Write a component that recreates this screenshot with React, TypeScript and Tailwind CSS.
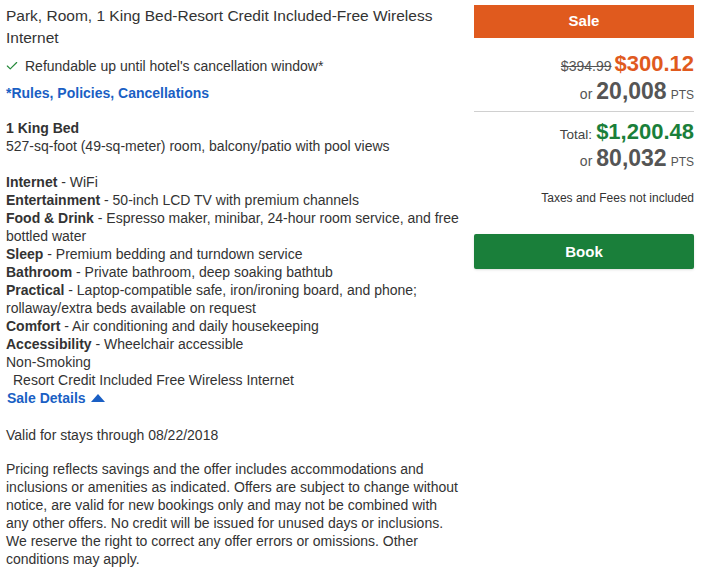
import { Check } from "lucide-react";

const amenities = [
    { label: "Internet", text: "WiFi" },
    { label: "Entertainment", text: "50-inch LCD TV with premium channels" },
    { label: "Food & Drink", text: "Espresso maker, minibar, 24-hour room service, and free bottled water" },
    { label: "Sleep", text: "Premium bedding and turndown service" },
    { label: "Bathroom", text: "Private bathroom, deep soaking bathtub" },
    { label: "Practical", text: "Laptop-compatible safe, iron/ironing board, and phone; rollaway/extra beds available on request" },
    { label: "Comfort", text: "Air conditioning and daily housekeeping" },
    { label: "Accessibility", text: "Wheelchair accessible" },
];

export default function App() {
    return (
        <div className="flex gap-[13px] pl-[6px] pr-[7px] pt-[5px] bg-white text-[#333] font-['Liberation_Sans',Arial,sans-serif] w-[701px] h-[570px] overflow-hidden">
            {/* Room details */}
            <div className="w-[455px] shrink-0 text-[14px] leading-[18px]">
                <h2 className="text-[15.5px] leading-[22px] text-[#333]">
                    Park, Room, 1 King Bed-Resort Credit Included-Free Wireless Internet
                </h2>
                <div className="flex items-center gap-[6px] mt-[8px]">
                    <Check size={14} strokeWidth={2} className="text-[#25893a] -ml-[1px]" />
                    <span>Refundable up until hotel's cancellation window*</span>
                </div>
                <a className="block mt-[9px] font-bold text-[#1a5fc4]">*Rules, Policies, Cancellations</a>

                <div className="mt-[17px] font-bold">1 King Bed</div>
                <div>527-sq-foot (49-sq-meter) room, balcony/patio with pool views</div>

                <div className="mt-[18px]">
                    {amenities.map((a) => (
                        <div key={a.label}>
                            <span className="font-bold">{a.label}</span> - {a.text}
                        </div>
                    ))}
                    <div>Non-Smoking</div>
                    <div className="pl-[7px]">Resort Credit Included Free Wireless Internet</div>
                </div>
                <a className="flex items-center gap-[5px] pl-[1px] font-bold text-[#1a5fc4]">
                    Sale Details
                    <svg width="14" height="8" viewBox="0 0 14 8">
                        <path d="M7 0 L14 8 L0 8 Z" fill="#1a5fc4" />
                    </svg>
                </a>

                <div className="mt-[19px]">Valid for stays through 08/22/2018</div>
                <p className="mt-[16px]">
                    Pricing reflects savings and the offer includes accommodations and inclusions or amenities as indicated. Offers are subject to change without notice, are valid for new bookings only and may not be combined with any other offers. No credit will be issued for unused days or inclusions. We reserve the right to correct any offer errors or omissions. Other conditions may apply.
                </p>
            </div>

            {/* Pricing */}
            <div className="w-[220px] shrink-0 text-right">
                <div className="h-[33px] bg-[#e05a1e] text-white font-bold text-[15px] flex items-center justify-center">
                    Sale
                </div>
                <div className="mt-[13px] flex items-baseline justify-end gap-[3px]">
                    <span className="text-[14px] text-[#555] line-through">$394.99</span>
                    <span className="text-[22px] font-bold text-[#e05a1e] leading-[26px]">$300.12</span>
                </div>
                <div className="flex items-baseline justify-end gap-[4px] text-[#555] mt-[1px]">
                    <span className="text-[14px]">or</span>
                    <span className="text-[23px] font-bold leading-[26px]">20,008</span>
                    <span className="text-[12px]">PTS</span>
                </div>
                <div className="mt-[6px] border-t border-[#d0d0d0]" />
                <div className="mt-[7px] flex items-baseline justify-end gap-[4px]">
                    <span className="text-[13.5px] text-[#444]">Total:</span>
                    <span className="text-[22px] font-bold text-[#1a7f3a] leading-[26px]">$1,200.48</span>
                </div>
                <div className="flex items-baseline justify-end gap-[4px] text-[#555]">
                    <span className="text-[14px]">or</span>
                    <span className="text-[23px] font-bold leading-[26px]">80,032</span>
                    <span className="text-[12px]">PTS</span>
                </div>
                <div className="mt-[17px] text-[12px] text-[#333]">Taxes and Fees not included</div>
                <button className="mt-[27px] w-full h-[35px] rounded-[2px] bg-[#1a7f3a] text-white font-bold text-[15px] flex items-center justify-center shadow-sm">
                    Book
                </button>
            </div>
        </div>
    );
}
